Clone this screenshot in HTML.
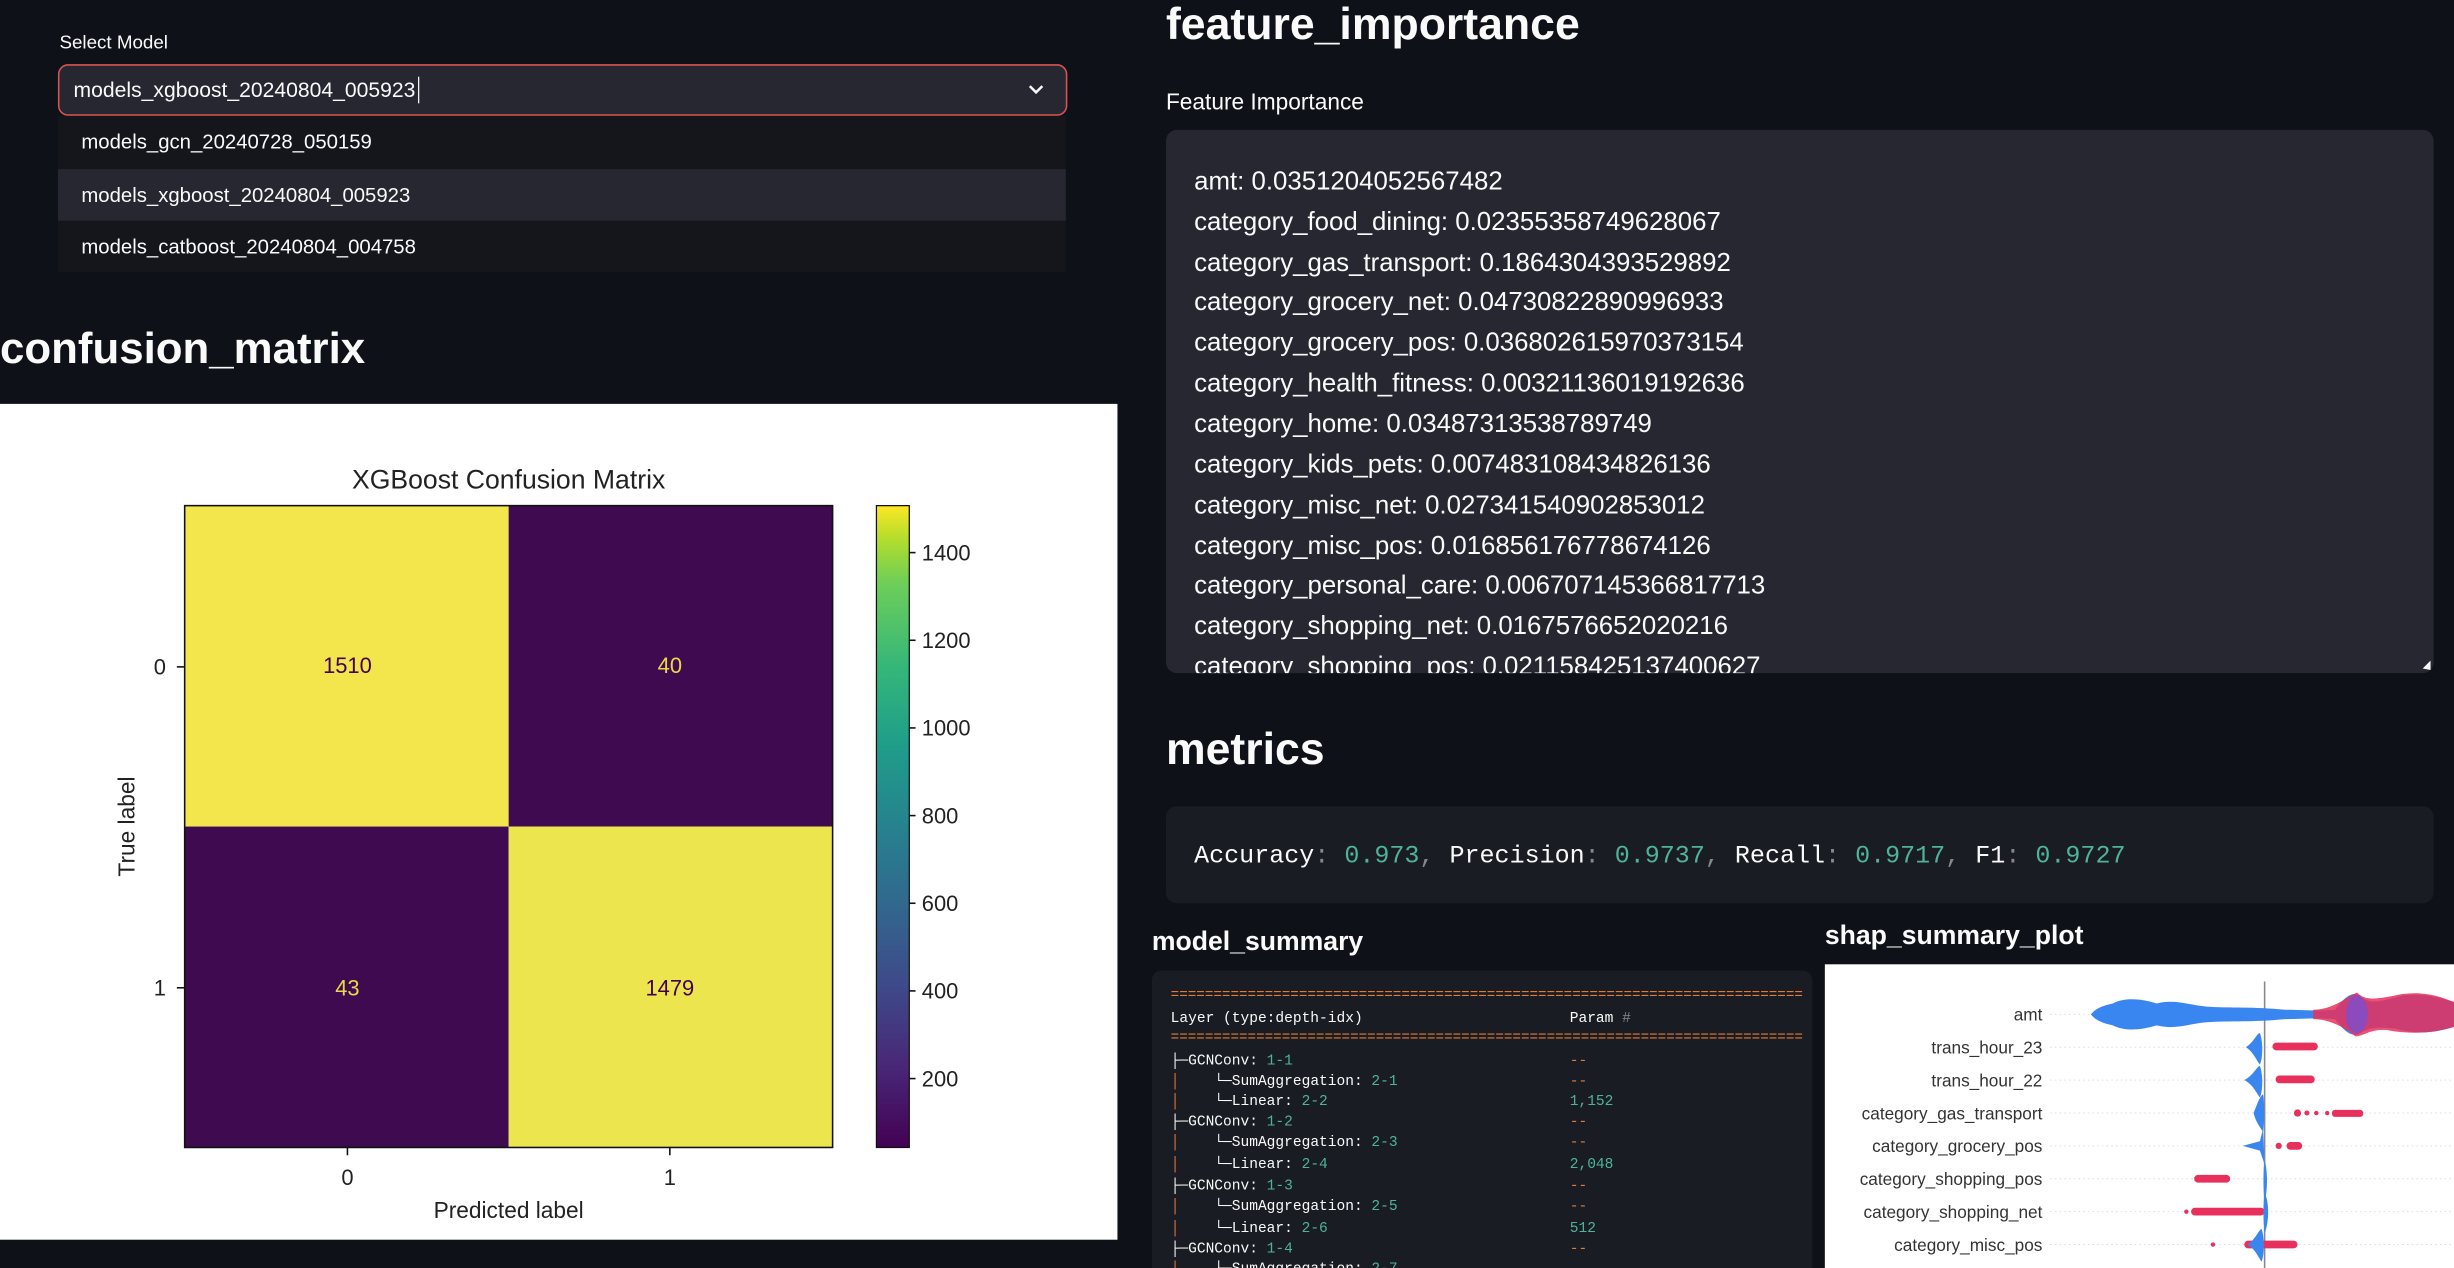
<!DOCTYPE html>
<html><head><meta charset="utf-8"><style>
html,body{margin:0;padding:0;background:#0e1117;width:2454px;height:1268px;overflow:hidden}
svg{display:block}
.s{font-family:"Liberation Sans",sans-serif}
.m{font-family:"Liberation Mono","DejaVu Sans Mono",monospace;white-space:pre}
</style></head><body>
<svg width="2454" height="1268" viewBox="0 0 1568 810" preserveAspectRatio="none" xmlns="http://www.w3.org/2000/svg">
<defs>
<linearGradient id="vir" x1="0" y1="1" x2="0" y2="0">
<stop offset="0" stop-color="#440154"/><stop offset="0.13" stop-color="#482878"/><stop offset="0.25" stop-color="#3e4989"/><stop offset="0.38" stop-color="#31688e"/><stop offset="0.5" stop-color="#26828e"/><stop offset="0.63" stop-color="#1f9e89"/><stop offset="0.75" stop-color="#35b779"/><stop offset="0.88" stop-color="#6ece58"/><stop offset="0.95" stop-color="#b5de2b"/><stop offset="1" stop-color="#fde725"/>
</linearGradient>
<clipPath id="fic"><rect x="745" y="83" width="810" height="347" rx="7"/></clipPath>
<clipPath id="msc"><rect x="736" y="620" width="422" height="190"/></clipPath>
<clipPath id="shc"><rect x="1166" y="616" width="402" height="194"/></clipPath>
</defs>
<rect width="1568" height="810" fill="#0e1117"/>

<text x="38" y="31" class="s" font-size="12" fill="#fafafa">Select Model</text>
<rect x="37.5" y="41.5" width="644" height="32" rx="6" fill="#262730" stroke="#d9534f" stroke-width="1"/>
<text x="47" y="62" class="s" font-size="13.5" fill="#fafafa">models_xgboost_20240804_005923</text>
<line x1="267.5" y1="49" x2="267.5" y2="66" stroke="#fafafa" stroke-width="0.8"/>
<path d="M658 55 L662 59 L666 55" fill="none" stroke="#fafafa" stroke-width="1.6"/>
<rect x="37" y="74" width="644" height="100" fill="#14161c"/>
<rect x="37" y="108" width="644" height="33" fill="#262730"/>
<text x="52" y="95" class="s" font-size="13" fill="#fafafa">models_gcn_20240728_050159</text>
<text x="52" y="129" class="s" font-size="13" fill="#fafafa">models_xgboost_20240804_005923</text>
<text x="52" y="162" class="s" font-size="13" fill="#fafafa">models_catboost_20240804_004758</text>

<text x="0" y="232" class="s" font-size="28" font-weight="bold" fill="#fafafa">confusion_matrix</text>

<rect x="0" y="258" width="714" height="534" fill="#ffffff"/>
<text x="325" y="312" class="s" font-size="17" fill="#222" text-anchor="middle">XGBoost Confusion Matrix</text>
<rect x="118" y="323" width="207" height="205" fill="#f3e54c"/>
<rect x="325" y="323" width="207" height="205" fill="#3f0a4f"/>
<rect x="118" y="528" width="207" height="205" fill="#3f0a4f"/>
<rect x="325" y="528" width="207" height="205" fill="#ece54d"/>
<rect x="118" y="323" width="414" height="410" fill="none" stroke="#111" stroke-width="1"/>
<text x="222" y="430" class="s" font-size="14" fill="#440154" text-anchor="middle">1510</text>
<text x="428" y="430" class="s" font-size="14" fill="#e8d84a" text-anchor="middle">40</text>
<text x="222" y="636" class="s" font-size="14" fill="#e8d84a" text-anchor="middle">43</text>
<text x="428" y="636" class="s" font-size="14" fill="#440154" text-anchor="middle">1479</text>
<line x1="113" y1="426" x2="118" y2="426" stroke="#111"/><line x1="113" y1="631" x2="118" y2="631" stroke="#111"/>
<line x1="222" y1="733" x2="222" y2="738" stroke="#111"/><line x1="428" y1="733" x2="428" y2="738" stroke="#111"/>
<text x="106" y="431" class="s" font-size="14" fill="#222" text-anchor="end">0</text>
<text x="106" y="636" class="s" font-size="14" fill="#222" text-anchor="end">1</text>
<text x="222" y="757" class="s" font-size="14" fill="#222" text-anchor="middle">0</text>
<text x="428" y="757" class="s" font-size="14" fill="#222" text-anchor="middle">1</text>
<text x="325" y="778" class="s" font-size="14.5" fill="#222" text-anchor="middle">Predicted label</text>
<text x="0" y="0" class="s" font-size="14.5" fill="#222" text-anchor="middle" transform="translate(86,528) rotate(-90)">True label</text>
<rect x="560" y="323" width="21" height="410" fill="url(#vir)" stroke="#111" stroke-width="0.8"/>
<g class="s" font-size="14" fill="#222">
<line x1="581" y1="353" x2="585" y2="353" stroke="#111"/><text x="589" y="358">1400</text>
<line x1="581" y1="409" x2="585" y2="409" stroke="#111"/><text x="589" y="414">1200</text>
<line x1="581" y1="465" x2="585" y2="465" stroke="#111"/><text x="589" y="470">1000</text>
<line x1="581" y1="521" x2="585" y2="521" stroke="#111"/><text x="589" y="526">800</text>
<line x1="581" y1="577" x2="585" y2="577" stroke="#111"/><text x="589" y="582">600</text>
<line x1="581" y1="633" x2="585" y2="633" stroke="#111"/><text x="589" y="638">400</text>
<line x1="581" y1="689" x2="585" y2="689" stroke="#111"/><text x="589" y="694">200</text>
</g>
<rect x="0" y="792" width="714" height="18" fill="#0e1117"/>

<text x="745" y="25" class="s" font-size="28.5" font-weight="bold" fill="#fafafa">feature_importance</text>
<text x="745" y="70" class="s" font-size="14.5" fill="#fafafa">Feature Importance</text>
<rect x="745" y="83" width="810" height="347" rx="7" fill="#262730"/>
<g clip-path="url(#fic)" class="s" font-size="16.5" fill="#fafafa">
<text x="763" y="121">amt: 0.0351204052567482</text>
<text x="763" y="147">category_food_dining: 0.02355358749628067</text>
<text x="763" y="173">category_gas_transport: 0.1864304393529892</text>
<text x="763" y="198">category_grocery_net: 0.04730822890996933</text>
<text x="763" y="224">category_grocery_pos: 0.036802615970373154</text>
<text x="763" y="250">category_health_fitness: 0.00321136019192636</text>
<text x="763" y="276">category_home: 0.03487313538789749</text>
<text x="763" y="302">category_kids_pets: 0.007483108434826136</text>
<text x="763" y="328">category_misc_net: 0.027341540902853012</text>
<text x="763" y="354">category_misc_pos: 0.016856176778674126</text>
<text x="763" y="379">category_personal_care: 0.006707145366817713</text>
<text x="763" y="405">category_shopping_net: 0.0167576652020216</text>
<text x="763" y="431">category_shopping_pos: 0.021158425137400627</text>
</g>
<path d="M1548 427 L1553 422 L1553 428 Z" fill="#fafafa"/>

<text x="745" y="488" class="s" font-size="28.5" font-weight="bold" fill="#fafafa">metrics</text>
<rect x="745" y="515" width="810" height="62" rx="7" fill="#1a1c23"/>
<text x="763" y="551" class="m" font-size="16" fill="#fafafa">Accuracy<tspan fill="#888">:</tspan> <tspan fill="#4fb39c">0.973</tspan><tspan fill="#888">,</tspan> Precision<tspan fill="#888">:</tspan> <tspan fill="#4fb39c">0.9737</tspan><tspan fill="#888">,</tspan> Recall<tspan fill="#888">:</tspan> <tspan fill="#4fb39c">0.9717</tspan><tspan fill="#888">,</tspan> F1<tspan fill="#888">:</tspan> <tspan fill="#4fb39c">0.9727</tspan></text>

<text x="736" y="607" class="s" font-size="17" font-weight="bold" fill="#fafafa">model_summary</text>
<rect x="736" y="620" width="422" height="200" rx="6" fill="#1a1c23"/>
<g clip-path="url(#msc)" class="m" font-size="9.3" fill="#fafafa">
<text x="748" y="638" fill="#e07b39" textLength="404" lengthAdjust="spacingAndGlyphs">==========================================================================</text>
<text x="748" y="653">Layer (type:depth-idx)</text><text x="1003" y="653">Param <tspan fill="#888">#</tspan></text>
<text x="748" y="665" fill="#e07b39" textLength="404" lengthAdjust="spacingAndGlyphs">==========================================================================</text>
<text x="748" y="680">├─GCNConv: <tspan fill="#4fb39c">1-1</tspan></text><text x="1003" y="680" fill="#e07b39">--</text>
<text x="748" y="693"><tspan fill="#e07b39">│</tspan>&#160;&#160;&#160;&#160;└─SumAggregation: <tspan fill="#4fb39c">2-1</tspan></text><text x="1003" y="693" fill="#e07b39">--</text>
<text x="748" y="706"><tspan fill="#e07b39">│</tspan>&#160;&#160;&#160;&#160;└─Linear: <tspan fill="#4fb39c">2-2</tspan></text><text x="1003" y="706" fill="#4fb39c">1,152</text>
<text x="748" y="719">├─GCNConv: <tspan fill="#4fb39c">1-2</tspan></text><text x="1003" y="719" fill="#e07b39">--</text>
<text x="748" y="732"><tspan fill="#e07b39">│</tspan>&#160;&#160;&#160;&#160;└─SumAggregation: <tspan fill="#4fb39c">2-3</tspan></text><text x="1003" y="732" fill="#e07b39">--</text>
<text x="748" y="746"><tspan fill="#e07b39">│</tspan>&#160;&#160;&#160;&#160;└─Linear: <tspan fill="#4fb39c">2-4</tspan></text><text x="1003" y="746" fill="#4fb39c">2,048</text>
<text x="748" y="760">├─GCNConv: <tspan fill="#4fb39c">1-3</tspan></text><text x="1003" y="760" fill="#e07b39">--</text>
<text x="748" y="773"><tspan fill="#e07b39">│</tspan>&#160;&#160;&#160;&#160;└─SumAggregation: <tspan fill="#4fb39c">2-5</tspan></text><text x="1003" y="773" fill="#e07b39">--</text>
<text x="748" y="787"><tspan fill="#e07b39">│</tspan>&#160;&#160;&#160;&#160;└─Linear: <tspan fill="#4fb39c">2-6</tspan></text><text x="1003" y="787" fill="#4fb39c">512</text>
<text x="748" y="800">├─GCNConv: <tspan fill="#4fb39c">1-4</tspan></text><text x="1003" y="800" fill="#e07b39">--</text>
<text x="748" y="813"><tspan fill="#e07b39">│</tspan>&#160;&#160;&#160;&#160;└─SumAggregation: <tspan fill="#4fb39c">2-7</tspan></text>
</g>

<text x="1166" y="603" class="s" font-size="17" font-weight="bold" fill="#fafafa">shap_summary_plot</text>
<rect x="1166" y="616" width="402" height="194" fill="#ffffff"/>
<g clip-path="url(#shc)">
<g class="s" font-size="11" fill="#333" text-anchor="end">
<text x="1305" y="652">amt</text>
<text x="1305" y="673">trans_hour_23</text>
<text x="1305" y="694">trans_hour_22</text>
<text x="1305" y="715">category_gas_transport</text>
<text x="1305" y="736">category_grocery_pos</text>
<text x="1305" y="757">category_shopping_pos</text>
<text x="1305" y="778">category_shopping_net</text>
<text x="1305" y="799">category_misc_pos</text>
</g>
<g stroke="#ddd" stroke-width="0.6" stroke-dasharray="1 2">
<line x1="1310" y1="648" x2="1568" y2="648"/><line x1="1310" y1="669" x2="1568" y2="669"/><line x1="1310" y1="690" x2="1568" y2="690"/><line x1="1310" y1="711" x2="1568" y2="711"/><line x1="1310" y1="732" x2="1568" y2="732"/><line x1="1310" y1="753" x2="1568" y2="753"/><line x1="1310" y1="774" x2="1568" y2="774"/><line x1="1310" y1="795" x2="1568" y2="795"/>
</g>
<line x1="1447" y1="627" x2="1447" y2="810" stroke="#888" stroke-width="1"/>
<path d="M1336 648 C1340 643 1346 642 1350 641 C1358 637 1368 638 1378 641 C1390 638 1398 642 1410 643 C1425 644 1440 643 1460 645 C1472 645 1480 646 1492 645 C1498 637 1503 633 1508 636 C1514 642 1520 640 1535 636 C1550 634 1560 638 1568 640 L1568 656 C1555 660 1545 661 1530 657 C1520 656 1514 656 1508 660 C1503 663 1498 659 1492 651 C1480 650 1470 651 1460 651 C1440 653 1425 652 1410 653 C1398 654 1390 658 1378 655 C1368 658 1358 659 1350 655 C1346 654 1340 653 1336 648 Z" fill="#3a86f0"/>
<path d="M1478 645 C1490 645 1498 638 1506 634 C1512 640 1520 638 1535 635 C1550 633 1560 637 1568 640 L1568 656 C1555 660 1540 661 1525 658 C1515 657 1510 662 1505 662 C1498 656 1488 651 1478 651 Z" fill="#e8305c" opacity="0.85"/>
<ellipse cx="1506" cy="648" rx="7" ry="12" fill="#7a4fd0" opacity="0.8"/>
<path d="M1435 669 C1440 666 1442 660 1444 660 C1446 665 1446 676 1444 680 C1442 678 1440 672 1435 669 Z" fill="#3a86f0"/>
<rect x="1452" y="666" width="29" height="5" rx="2.5" fill="#e8305c"/>
<path d="M1434 690 C1440 687 1442 681 1444 681 C1446 686 1446 697 1444 701 C1442 699 1440 693 1434 690 Z" fill="#3a86f0"/>
<rect x="1454" y="687" width="25" height="5" rx="2.5" fill="#e8305c"/>
<path d="M1440 711 C1442 706 1444 700 1446 699 C1447 704 1447 718 1446 723 C1444 720 1441 716 1440 711 Z" fill="#3a86f0"/>
<circle cx="1468" cy="711" r="2.3" fill="#e8305c"/><circle cx="1474" cy="711" r="1.6" fill="#e8305c"/><circle cx="1480" cy="711" r="1.4" fill="#e8305c"/><circle cx="1487" cy="711" r="1.4" fill="#e8305c"/>
<rect x="1490" y="709" width="20" height="4.5" rx="2" fill="#e8305c"/>
<path d="M1433 732 L1444 729 L1446 721 L1447 744 L1444 735 Z" fill="#3a86f0"/>
<rect x="1454" y="730" width="4" height="4" rx="2" fill="#e8305c"/><rect x="1461" y="729.5" width="10" height="5" rx="2.5" fill="#e8305c"/>
<rect x="1402" y="750.5" width="23" height="5" rx="2.5" fill="#e8305c"/>
<path d="M1447 741 C1449 748 1449 760 1447 768 C1446 760 1446 748 1447 741 Z" fill="#3a86f0"/>
<circle cx="1397" cy="774" r="1.4" fill="#e8305c"/>
<rect x="1400" y="771.5" width="47" height="5" rx="2.5" fill="#e8305c"/>
<path d="M1447 762 C1450 768 1450 780 1447 788 C1446 780 1446 768 1447 762 Z" fill="#3a86f0"/>
<circle cx="1414" cy="795" r="1.4" fill="#e8305c"/>
<rect x="1434" y="792.5" width="34" height="5" rx="2.5" fill="#e8305c"/>
<path d="M1436 795 C1441 792 1443 786 1445 785 C1447 790 1447 802 1445 806 C1443 803 1441 798 1436 795 Z" fill="#3a86f0"/>
</g>
</svg>
</body></html>
